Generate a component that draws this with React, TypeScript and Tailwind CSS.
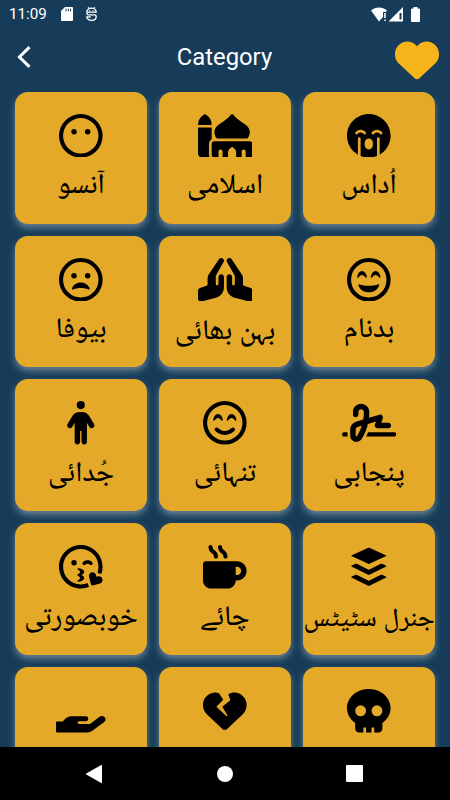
import type { ComponentType } from "react";
import {
  FaBuffer,
  FaFaceSadCry,
  FaHandsPraying,
  FaHeart,
  FaHeartCrack,
  FaMosque,
  FaMugHot,
  FaPerson,
  FaRegFaceKissWinkHeart,
  FaRegFaceMehBlank,
  FaRegFaceSmileBeam,
  FaSignature,
  FaSkull,
} from "react-icons/fa6";

interface IconProps {
  className?: string;
}

interface Category {
  id: number;
  label: string;
  icon: ComponentType<IconProps>;
  iconClass?: string;
  labelClass?: string;
}

const FrownIcon = ({ className }: IconProps) => (
  <svg className={className} viewBox="0 0 512 512" fill="currentColor">
    <circle cx="256" cy="256" r="232" fill="none" stroke="currentColor" strokeWidth="48" />
    <circle cx="176.400" cy="208" r="32" />
    <circle cx="336.400" cy="208" r="32" />
    <path d="M256 288c50 0 90 30 104 70 3 9-4 15-12 12-26-12-58-18-92-18s-66 6-92 18c-8 3-15-3-12-12 14-40 54-70 104-70z" />
  </svg>
);

const beamEye =
  "M217.6 228.800c-8-11-26-28.600-41.600-28.600s-33.600 17.600-41.600 28.600c-2.100 2.800-5.700 3.900-8.900 2.800s-5.500-4.100-5.500-7.600c0-17.900 6.700-35.600 16.600-48.800 9.800-13 23.900-23.200 39.400-23.200s29.600 10.200 39.400 23.200c9.900 13.200 16.600 30.900 16.600 48.800 0 3.400-2.200 6.500-5.500 7.600s-6.900 0-8.900-2.800z";

const GrinIcon = ({ className }: IconProps) => (
  <svg className={className} viewBox="0 0 512 512" fill="currentColor">
    <circle cx="256" cy="256" r="232" fill="none" stroke="currentColor" strokeWidth="48" />
    <path d={beamEye} />
    <path d={beamEye} transform="translate(160 0)" />
    <path d="M147 310c30 10 68 16 109 16s79-6 109-16c9-3 15 4 12 13-15 46-63 80-121 80s-106-34-121-80c-3-9 3-16 12-13z" />
  </svg>
);

const OpenHandIcon = ({ className }: IconProps) => (
  <svg className={className} viewBox="170 118 150 131" fill="currentColor">
    <path d="M170 218q0-2 2-2h18q12-16 27-16h43q7 0 7 7.500t-8 7.500h-20q-4 0-4 4t4 4h33l30-22q8-5 14 2t-1 14l-37 27q-6 4.500-12 4.500h-93q-3 0-3-3z" />
  </svg>
);

const categories: Category[] = [
  { id: 1, label: "آنسو", icon: FaRegFaceMehBlank },
  { id: 2, label: "اسلامی", icon: FaMosque, iconClass: "w-[54.6px]" },
  { id: 3, label: "اُداس", icon: FaFaceSadCry },
  { id: 4, label: "بیوفا", icon: FrownIcon },
  { id: 5, label: "بہن بھائی", icon: FaHandsPraying, iconClass: "w-[54.6px]", labelClass: "mt-2 text-[28.3px]" },
  { id: 6, label: "بدنام", icon: GrinIcon },
  { id: 7, label: "جُدائی", icon: FaPerson },
  { id: 8, label: "تنہائی", icon: FaRegFaceSmileBeam },
  { id: 9, label: "پنجابی", icon: FaSignature, iconClass: "w-[54.6px]" },
  { id: 10, label: "خوبصورتی", icon: FaRegFaceKissWinkHeart },
  { id: 11, label: "چائے", icon: FaMugHot },
  { id: 12, label: "جنرل سٹیٹس", icon: FaBuffer, labelClass: "mt-2 text-[26.4px]" },
  { id: 13, label: "", icon: OpenHandIcon, iconClass: "w-[50px]" },
  { id: 14, label: "", icon: FaHeartCrack },
  { id: 15, label: "", icon: FaSkull },
];

const StatusBar = () => (
  <div className="flex h-7 shrink-0 items-center pl-[9px] pr-[30px]">
    <span className="pt-0.5 text-[15.2px] leading-none">11:09</span>
    <svg className="ml-[14px]" width="12" height="14" viewBox="0 0 12 14" fill="currentColor">
      <path d="M4 0h7a1 1 0 0 1 1 1v12a1 1 0 0 1-1 1H1a1 1 0 0 1-1-1V4z" />
      <path d="M5 1.700v2.600M7.300 1.700v2.600M9.600 1.700v2.600" stroke="#163c59" strokeWidth="1" />
    </svg>
    <svg className="ml-[13px]" width="11" height="14" viewBox="0 0 11 14" fill="none" stroke="currentColor" strokeWidth="1.3">
      <path d="M.8 5.200C.8 2.800 2.800 1.200 5.500 1.200s4.700 1.600 4.700 4H2.800C1.600 5.200.8 5.600.8 6.500s.8 1.400 2 1.400h5.600c1.200 0 1.800.5 1.800 1.500 0 2.300-2 3.900-4.700 3.900S.8 11.700.8 9.800h4" />
      <path d="M2 0l1.200 1.800M9 0L7.800 1.800M3.800 3.200v1M7.200 3.200v1" strokeWidth="1" />
    </svg>
    <div className="ml-auto flex items-center">
      <svg width="32" height="15" viewBox="0 0 32 15" fill="currentColor">
        <path d="M0 3.500C4.500-.6 11.500-.6 16 3.500L14.600 5H12v5l-4 4.500z" />
        <path d="M13.200 6h1.500v5h-1.500zM13.200 12.600h1.500v1.500h-1.500z" />
        <path fillRule="evenodd" d="M32 0v14.500H17.500zM28.500 6v6.500h2V6z" />
      </svg>
      <svg className="ml-[8px]" width="9" height="15" viewBox="0 0 9 15" fill="currentColor">
        <path d="M2.500 0h4v1.500H8a1 1 0 0 1 1 1V14a1 1 0 0 1-1 1H1a1 1 0 0 1-1-1V2.500a1 1 0 0 1 1-1h1.500z" />
      </svg>
    </div>
  </div>
);

const Header = () => (
  <header className="flex h-[63.8px] shrink-0 items-center justify-between pl-[17px] pr-[11px]">
    <button className="w-[37px] pb-1.5" aria-label="Back">
      <svg width="14" height="22" viewBox="0 0 14 22" fill="none" stroke="currentColor" strokeWidth="3">
        <path d="M12.500 1.200L2.400 11l10.100 9.800" />
      </svg>
    </button>
    <h1 className="pb-1 text-[23.8px]">Category</h1>
    <FaHeart className="size-11 text-[#f6b41a]" />
  </header>
);

const CategoryCard = ({ category }: { category: Category }) => {
  const Icon = category.icon;
  return (
    <div className="flex h-[131.8px] flex-col items-center rounded-[13px] bg-[#e4a928] pt-[22px] text-black shadow-[0_4px_7px_rgba(255,255,255,0.35)]">
      <Icon className={`h-[43.6px] shrink-0 ${category.iconClass ?? "w-[43.6px]"}`} />
      <span
        dir="rtl"
        lang="ur"
        className={`font-['Noto_Naskh_Arabic_UI','Noto_Naskh_Arabic',serif] leading-[46px] font-medium whitespace-nowrap [word-spacing:1px] ${category.labelClass ?? "mt-1.5 text-[28.3px]"}`}
      >
        {category.label}
      </span>
    </div>
  );
};

const NavigationBar = () => (
  <nav className="flex h-[53px] shrink-0 items-center justify-between bg-black pl-[86px] pr-[87px]">
    <svg width="16" height="18" viewBox="0 0 16 18" fill="white">
      <path d="M16 .5v17a.5.5 0 0 1-.8.4L.3 9.500a.6.6 0 0 1 0-1L15.200.1a.5.5 0 0 1 .8.4z" />
    </svg>
    <span className="ml-[2px] size-4 rounded-full bg-white" />
    <span className="size-[17px] rounded-[1px] bg-white" />
  </nav>
);

const App = () => {
  return (
    <div className="flex h-[800px] w-[450px] flex-col overflow-hidden bg-[#163c59] font-['Roboto',sans-serif] text-white">
      <StatusBar />
      <Header />
      <main className="grid min-h-0 flex-1 grid-cols-3 content-start gap-3 overflow-hidden px-[15px]">
        {categories.map((category) => (
          <CategoryCard key={category.id} category={category} />
        ))}
      </main>
      <NavigationBar />
    </div>
  );
};

export default App;
